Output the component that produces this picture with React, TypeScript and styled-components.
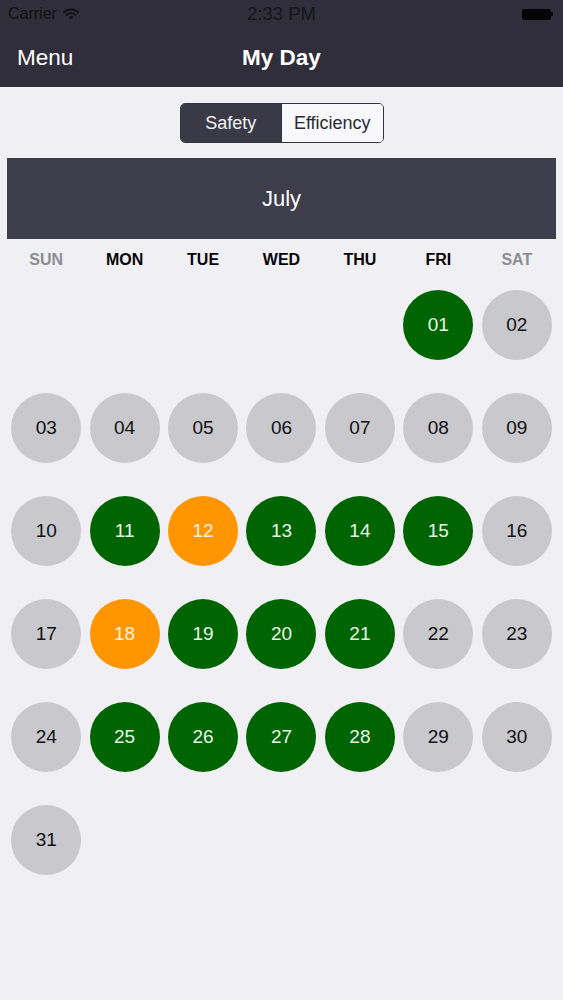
import styled, { createGlobalStyle } from 'styled-components';

type DayStatus = 'none' | 'good' | 'warn';

const GlobalStyle = createGlobalStyle`
  html, body {
    margin: 0;
    padding: 0;
    background: #efeff4;
    font-family: 'Liberation Sans', Arial, sans-serif;
  }
`;

const Screen = styled.div`
  width: 563px;
  min-height: 1000px;
  background: #efeff4;
`;

const TopBar = styled.header`
  background: #2f2e3a;
`;

const StatusBar = styled.div`
  height: 28px;
  display: grid;
  grid-template-columns: 1fr auto 1fr;
  align-items: center;
  padding: 0 8px;
  color: #101014;
  font-size: 16px;
`;

const Carrier = styled.div`
  display: flex;
  align-items: center;
  gap: 6px;
`;

const Clock = styled.div`
  font-size: 18.5px;
  color: #15151a;
`;

const Battery = styled.div`
  justify-self: end;
  display: flex;
  align-items: center;
  margin-right: 2px;
`;

const BatteryBody = styled.div`
  width: 29px;
  height: 11px;
  border-radius: 2px;
  background: #050507;
`;

const BatteryNub = styled.div`
  width: 2px;
  height: 4px;
  background: #050507;
  border-radius: 0 1px 1px 0;
`;

const NavBar = styled.div`
  height: 59px;
  display: grid;
  grid-template-columns: 1fr auto 1fr;
  align-items: center;
  padding: 0 17px;
  color: #fff;
  font-size: 22.5px;
`;

const NavTitle = styled.div`
  font-weight: 700;
`;

const Content = styled.main`
  padding: 16px 7px 0;
  display: flex;
  flex-direction: column;
  align-items: center;
`;

const Segmented = styled.div`
  display: flex;
  width: 204px;
  height: 40px;
  border: 1px solid #34343f;
  border-radius: 5px;
  overflow: hidden;
  box-sizing: border-box;
`;

const Segment = styled.div<{ $active: boolean }>`
  flex: 1;
  display: flex;
  align-items: center;
  justify-content: center;
  font-size: 18px;
  background: ${(p) => (p.$active ? '#3a3a47' : '#f8f8fa')};
  color: ${(p) => (p.$active ? '#f2f2f4' : '#2a2a33')};
  & + & {
    border-left: 1px solid #34343f;
  }
`;

const MonthBar = styled.div`
  margin-top: 15px;
  align-self: stretch;
  height: 81px;
  background: #3d3d4b;
  color: #fff;
  display: flex;
  align-items: center;
  justify-content: center;
  font-size: 22px;
`;

const Grid = styled.div`
  align-self: stretch;
  display: grid;
  grid-template-columns: repeat(7, 1fr);
`;

const WeekDay = styled.div<{ $weekend: boolean }>`
  height: 42px;
  margin-bottom: 9px;
  display: flex;
  align-items: center;
  justify-content: center;
  font-size: 16px;
  font-weight: 700;
  color: ${(p) => (p.$weekend ? '#8d8d93' : '#050505')};
`;

const Cell = styled.div`
  height: 103px;
  display: flex;
  justify-content: center;
`;

const colors: Record<DayStatus, { bg: string; fg: string }> = {
  none: { bg: '#c8c8cd', fg: '#111' },
  good: { bg: '#006400', fg: '#e8f5e8' },
  warn: { bg: '#ff9500', fg: '#fff3e0' },
};

const DayCircle = styled.div<{ $status: DayStatus }>`
  width: 70px;
  height: 70px;
  border-radius: 50%;
  display: flex;
  align-items: center;
  justify-content: center;
  font-size: 19px;
  background: ${(p) => colors[p.$status].bg};
  color: ${(p) => colors[p.$status].fg};
`;

const WifiIcon = () => (
  <svg width="16" height="12" viewBox="0 0 16 12">
    <path d="M1 4.2a10 10 0 0 1 14 0" stroke="#101014" strokeWidth="1.8" fill="none" strokeLinecap="round" />
    <path d="M3.6 6.8a6.4 6.4 0 0 1 8.8 0" stroke="#101014" strokeWidth="1.8" fill="none" strokeLinecap="round" />
    <path d="M8 11.5l-2.2-2.4a3.1 3.1 0 0 1 4.4 0z" fill="#101014" />
  </svg>
);

const weekDays = ['SUN', 'MON', 'TUE', 'WED', 'THU', 'FRI', 'SAT'];

const good = [1, 11, 13, 14, 15, 19, 20, 21, 25, 26, 27, 28];
const warn = [12, 18];

const statusOf = (day: number): DayStatus => {
  if (good.includes(day)) return 'good';
  if (warn.includes(day)) return 'warn';
  return 'none';
};

// July starts on a Friday
const firstOffset = 5;

export default function App() {
  const cells: (number | null)[] = [];
  for (let i = 0; i < firstOffset; i++) cells.push(null);
  for (let d = 1; d <= 31; d++) cells.push(d);

  return (
    <Screen>
      <GlobalStyle />
      <TopBar>
        <StatusBar>
          <Carrier>
            Carrier
            <WifiIcon />
          </Carrier>
          <Clock>2:33 PM</Clock>
          <Battery>
            <BatteryBody />
            <BatteryNub />
          </Battery>
        </StatusBar>
        <NavBar>
          <div>Menu</div>
          <NavTitle>My Day</NavTitle>
          <div />
        </NavBar>
      </TopBar>
      <Content>
        <Segmented>
          <Segment $active>Safety</Segment>
          <Segment $active={false}>Efficiency</Segment>
        </Segmented>
        <MonthBar>July</MonthBar>
        <Grid>
          {weekDays.map((w, i) => (
            <WeekDay key={w} $weekend={i === 0 || i === 6}>
              {w}
            </WeekDay>
          ))}
          {cells.map((d, i) => (
            <Cell key={i}>
              {d !== null && (
                <DayCircle $status={statusOf(d)}>
                  {String(d).padStart(2, '0')}
                </DayCircle>
              )}
            </Cell>
          ))}
        </Grid>
      </Content>
    </Screen>
  );
}
